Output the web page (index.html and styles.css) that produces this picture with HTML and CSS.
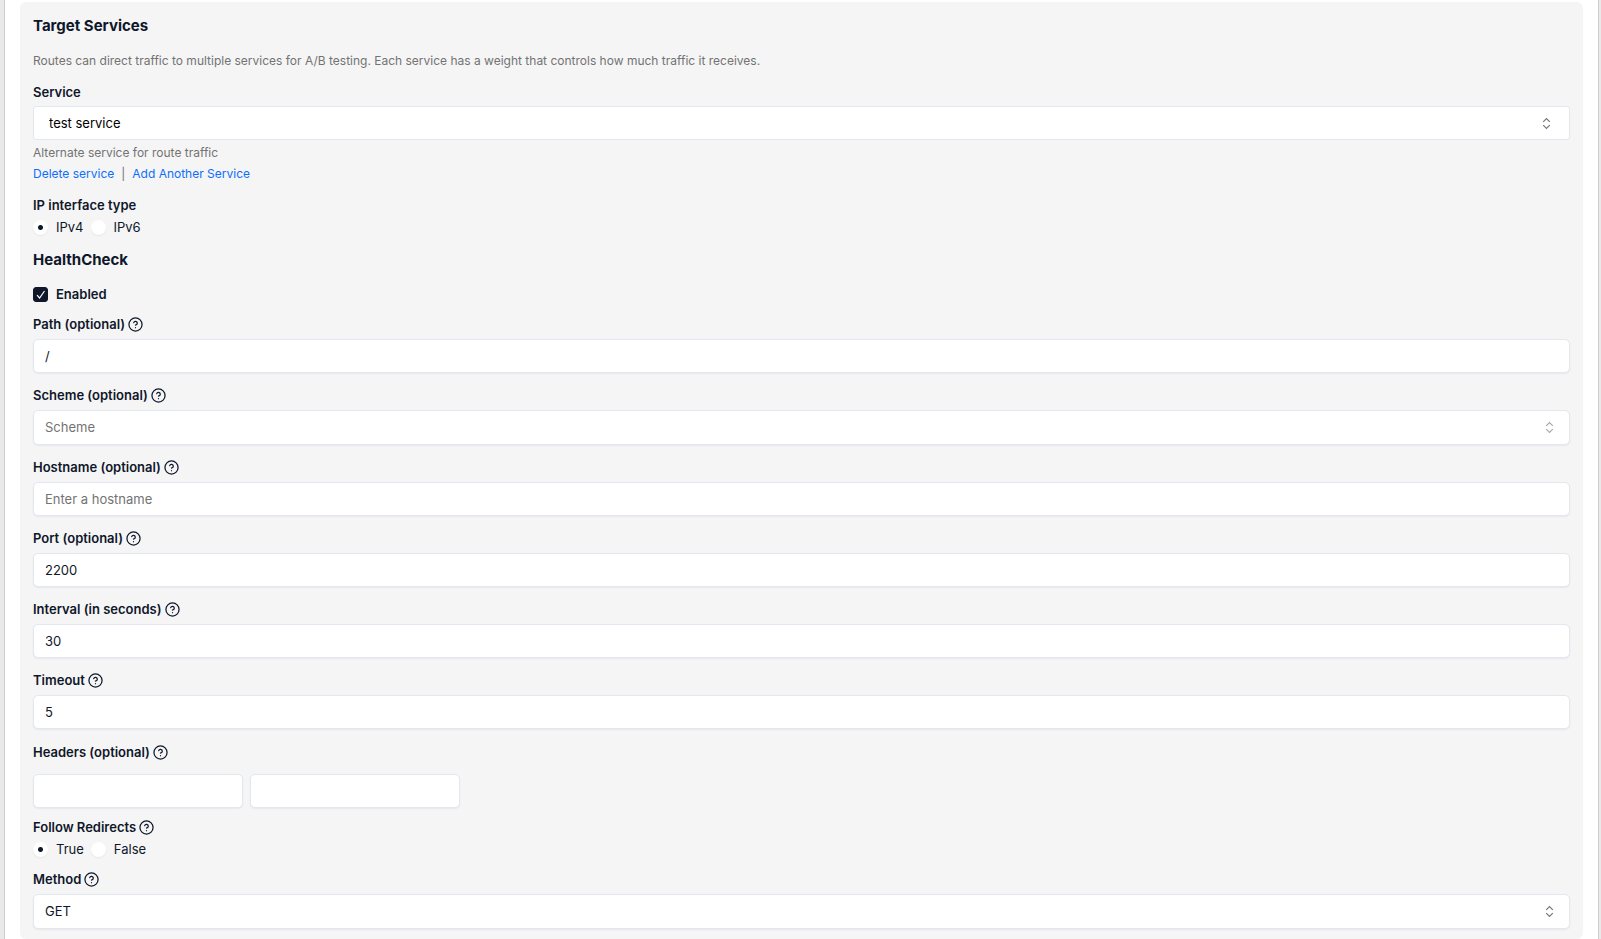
FILE: index.html
```
<!doctype html>
<html lang="en">
    <head>
        <meta charset="UTF-8">
        <meta name="viewport" content="width=device-width, initial-scale=1.0">
        <title>Target Services</title>
        <link rel="stylesheet" href="styles.css">
    </head>
    <body>
        <!-- Shared icons -->
        <svg class="sprite" aria-hidden="true">
            <symbol id="help" viewBox="0 0 24 24">
                <circle cx="12" cy="12" r="10.5"/>
                <path d="M9.1 9a3 3 0 0 1 5.8 1c0 2-3 3-3 3M12 17h.01"/>
            </symbol>
            <symbol id="sort" viewBox="0 0 15 15">
                <path d="M4.2 5.8 7.5 2.5l3.3 3.3M4.2 9.2l3.3 3.3 3.3-3.3"/>
            </symbol>
        </svg>
        <main class="page">
            <form class="panel">
                <h2 class="title">Target Services</h2>
                <p class="description">Routes can direct traffic to multiple services for A/B testing. Each service has a weight that controls how much traffic it receives.</p>
                <div class="service">
                    <label class="label" for="service">Service</label>
                    <div class="select-wrap service-select">
                        <select class="control" id="service">
                            <option>test service</option>
                        </select>
                        <svg class="sort-icon"><use href="#sort"/></svg>
                    </div>
                    <p class="hint">Alternate service for route traffic</p>
                    <div class="links">
                        <a href="#">Delete service</a>
                        <span class="separator">|</span>
                        <a href="#">Add Another Service</a>
                    </div>
                </div>
                <fieldset class="radio-group">
                    <legend class="label">IP interface type</legend>
                    <div class="radios">
                        <label class="choice"><input class="radio" type="radio" name="ip" checked>IPv4</label>
                        <label class="choice"><input class="radio" type="radio" name="ip">IPv6</label>
                    </div>
                </fieldset>
                <h3 class="subtitle">HealthCheck</h3>
                <div class="enabled">
                    <span class="checkbox-wrap">
                        <input class="checkbox" id="enabled" type="checkbox" checked>
                        <svg class="check-icon" viewBox="0 0 15 15"><path d="m4 8.2 2.6 2.8L11.5 4"/></svg>
                    </span>
                    <label class="label" for="enabled">Enabled</label>
                </div>
                <div class="fields">
                    <div class="field">
                        <label class="label" for="path">Path (optional) <svg class="help-icon"><use href="#help"/></svg></label>
                        <input class="control" id="path" type="text" value="/">
                    </div>
                    <div class="field">
                        <label class="label" for="scheme">Scheme (optional) <svg class="help-icon"><use href="#help"/></svg></label>
                        <div class="select-wrap empty">
                            <select class="control" id="scheme">
                                <option value="">Scheme</option>
                                <option>http</option>
                                <option>https</option>
                            </select>
                            <svg class="sort-icon"><use href="#sort"/></svg>
                        </div>
                    </div>
                    <div class="field">
                        <label class="label" for="hostname">Hostname (optional) <svg class="help-icon"><use href="#help"/></svg></label>
                        <input class="control" id="hostname" type="text" placeholder="Enter a hostname">
                    </div>
                    <div class="field">
                        <label class="label" for="port">Port (optional) <svg class="help-icon"><use href="#help"/></svg></label>
                        <input class="control" id="port" type="text" value="2200">
                    </div>
                    <div class="field">
                        <label class="label" for="interval">Interval (in seconds) <svg class="help-icon"><use href="#help"/></svg></label>
                        <input class="control" id="interval" type="text" value="30">
                    </div>
                    <div class="field">
                        <label class="label" for="timeout">Timeout <svg class="help-icon"><use href="#help"/></svg></label>
                        <input class="control" id="timeout" type="text" value="5">
                    </div>
                </div>
                <div class="headers">
                    <label class="label" for="header-name">Headers (optional) <svg class="help-icon"><use href="#help"/></svg></label>
                    <div class="header-row">
                        <input class="control" id="header-name" type="text" aria-label="Header name">
                        <input class="control" id="header-value" type="text" aria-label="Header value">
                    </div>
                </div>
                <fieldset class="radio-group redirects">
                    <legend class="label">Follow Redirects <svg class="help-icon"><use href="#help"/></svg></legend>
                    <div class="radios">
                        <label class="choice"><input class="radio" type="radio" name="redirects" checked>True</label>
                        <label class="choice"><input class="radio" type="radio" name="redirects">False</label>
                    </div>
                </fieldset>
                <div class="field">
                    <label class="label" for="method">Method <svg class="help-icon"><use href="#help"/></svg></label>
                    <div class="select-wrap">
                        <select class="control" id="method">
                            <option>GET</option>
                            <option>HEAD</option>
                        </select>
                        <svg class="sort-icon"><use href="#sort"/></svg>
                    </div>
                </div>
            </form>
        </main>
    </body>
</html>
```
FILE: styles.css
```
:root {
    --text-color: #0f172a;
    --muted-color: #737373;
    --link-color: #0d6efd;
    --border-color: #e2e8f0;
    --panel-color: #f5f5f5;
    --shadow: 0 1px 2px rgba(0, 0, 0, 0.06);
}
* {
    box-sizing: border-box;
}
body {
    margin: 0;
    background-color: #e9e9e9;
    color: var(--text-color);
    font-family: Inter, "Liberation Sans", sans-serif;
    font-size: 13px;
    line-height: 20px;
}
h2, h3, p, fieldset, legend {
    margin: 0;
    padding: 0;
    border: 0;
}
.sprite {
    display: none;
}
.page {
    margin: 0 2px 0 4px;
    padding: 2px 15px 0;
    border: solid #cdcdcd;
    border-width: 0 1px;
    background-color: #fff;
}
.panel {
    padding: 12px 13px 10px;
    border-radius: 6px;
    background-color: var(--panel-color);
}
.title, .subtitle {
    font-size: 15px;
    line-height: 24px;
    font-weight: 700;
}
.description {
    margin-top: 13px;
    font-size: 12px;
    color: var(--muted-color);
}
.service {
    margin-top: 11px;
}
.label {
    display: flex;
    align-items: center;
    gap: 3px;
    font-weight: 600;
}
.help-icon {
    width: 15px;
    height: 15px;
    fill: none;
    stroke: currentColor;
    stroke-width: 2;
    stroke-linecap: round;
    stroke-linejoin: round;
}
.control {
    display: block;
    width: 100%;
    height: 34px;
    padding: 0 11px;
    border: 1px solid var(--border-color);
    border-radius: 5px;
    background-color: #fff;
    box-shadow: var(--shadow);
    color: var(--text-color);
    font: inherit;
    appearance: none;
}
.control::placeholder {
    color: var(--muted-color);
}
.select-wrap {
    position: relative;
}
.field .select-wrap .control {
    height: 35px;
    padding-bottom: 2px;
}
.sort-icon {
    position: absolute;
    top: 10px;
    right: 13px;
    width: 15px;
    height: 15px;
    fill: none;
    stroke: #73767d;
    stroke-width: 1.2;
    pointer-events: none;
}
.empty .control {
    color: var(--muted-color);
}
.empty .sort-icon {
    stroke: #a8a8a8;
}
.service-select {
    margin-top: 4px;
}
.service-select .control {
    padding: 0 15px;
    border-radius: 3px;
    box-shadow: none;
    color: #000;
}
.service-select .sort-icon {
    right: 16px;
}
.hint {
    margin-top: 3px;
    font-size: 12px;
    color: var(--muted-color);
}
.links {
    display: flex;
    gap: 7px;
    margin-top: 1px;
    font-size: 12px;
}
.links a {
    color: var(--link-color);
    text-decoration: none;
}
.links a:hover {
    text-decoration: underline;
}
.separator {
    color: var(--muted-color);
}
.radio-group {
    margin: 11px 0;
}
.redirects {
    margin: 9px 0 10px;
}
.radios {
    display: flex;
    gap: 7px;
    margin-top: 2px;
}
.choice {
    display: flex;
    align-items: center;
    gap: 8px;
}
.radio {
    width: 15px;
    height: 15px;
    margin: 0;
    border-radius: 50%;
    background-color: #fff;
    box-shadow: var(--shadow);
    appearance: none;
}
.radio:checked {
    background-image: radial-gradient(circle, var(--text-color) 2px, transparent 3px);
}
.enabled {
    display: flex;
    align-items: center;
    gap: 8px;
    margin: 12px 0 10px;
}
.checkbox-wrap {
    position: relative;
    width: 15px;
    height: 15px;
}
.checkbox {
    display: block;
    width: 15px;
    height: 15px;
    margin: 0;
    border: 1px solid var(--text-color);
    border-radius: 3px;
    background-color: #fff;
    appearance: none;
}
.checkbox:checked {
    background-color: var(--text-color);
}
.check-icon {
    position: absolute;
    inset: 0;
    fill: none;
    stroke: #fff;
    stroke-width: 1.2;
    pointer-events: none;
}
.fields {
    display: flex;
    flex-direction: column;
    gap: 12px;
}
.field {
    display: flex;
    flex-direction: column;
    gap: 5px;
}
.headers {
    margin-top: 13px;
}
.header-row {
    display: flex;
    gap: 7px;
    margin-top: 12px;
}
.header-row .control {
    width: 210px;
}
```
